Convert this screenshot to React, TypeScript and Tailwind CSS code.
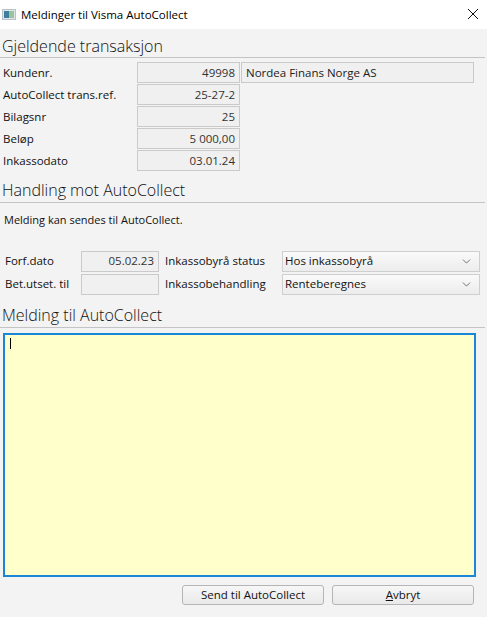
import { ChevronDown } from 'lucide-react'

const font = { fontFamily: '"Open Sans", "Noto Sans", sans-serif' }

function Field({ value, className = '' }: { value: string; className?: string }) {
  return (
    <div
      className={`flex h-[21px] items-center justify-end border border-[#cacaca] bg-[#f0f0f0] px-[4px] text-[11.5px] text-[#333] ${className}`}
    >
      {value}
    </div>
  )
}

function SectionHeader({ title, className = '' }: { title: string; className?: string }) {
  return (
    <div className={`border-b border-[#c4c4c4] pl-[2px] text-[16px] font-light leading-[20px] text-[#111] ${className}`}>
      {title}
    </div>
  )
}

function Select({ value }: { value: string }) {
  return (
    <div className="flex h-[21px] flex-1 items-center justify-between border border-[#cfcfcf] bg-gradient-to-b from-[#fafafa] to-[#ececec] pl-[2px] pr-[6px] text-[11.5px] text-[#111]">
      <span>{value}</span>
      <ChevronDown className="h-[13px] w-[13px] text-[#555]" strokeWidth={1.5} />
    </div>
  )
}

export default function App() {
  const rows = [
    ['Kundenr.', '49998'],
    ['AutoCollect trans.ref.', '25-27-2'],
    ['Bilagsnr', '25'],
    ['Beløp', '5 000,00'],
    ['Inkassodato', '03.01.24'],
  ]

  return (
    <div className="flex h-[617px] w-[487px] flex-col bg-[#f3f3f3]" style={font}>
      {/* title bar */}
      <div className="flex h-[29px] items-center bg-white pl-[2px] pr-[8px]">
        <svg width="14" height="11" viewBox="0 0 14 11" className="mr-[5px]">
          <rect x="0.5" y="0.5" width="13" height="10" fill="#dfe6ea" stroke="#b9c2c8" />
          <rect x="2" y="2" width="5" height="7" fill="#3f7f9e" />
          <rect x="7" y="2" width="5" height="7" fill="#9cc39a" />
        </svg>
        <span className="flex-1 text-[11.5px] text-black">Meldinger til Visma AutoCollect</span>
        <svg width="12" height="12" viewBox="0 0 12 12" className="mb-[1px]">
          <path d="M1 1L11 11M11 1L1 11" stroke="#111" strokeWidth="1" />
        </svg>
      </div>

      {/* Gjeldende transaksjon */}
      <SectionHeader title="Gjeldende transaksjon" className="mt-[7px] mr-[2px] pb-[1px]" />
      <div className="mt-[4px] flex flex-col gap-[1px]">
        {rows.map(([label, value], i) => (
          <div key={label} className="flex h-[21px] items-center">
            <span className="w-[137px] pl-[3px] text-[11.5px] text-[#111]">{label}</span>
            <Field value={value} className="w-[103px]" />
            {i === 0 && (
              <div className="ml-[1px] flex h-[21px] w-[233px] items-center border border-[#cacaca] bg-[#f0f0f0] px-[4px] text-[11.5px] text-[#222]">
                Nordea Finans Norge AS
              </div>
            )}
          </div>
        ))}
      </div>

      {/* Handling mot AutoCollect */}
      <SectionHeader title="Handling mot AutoCollect" className="mt-[9px] mr-[2px] pb-[2px]" />
      <div className="mt-[9px] pl-[4px] text-[11px] text-[#111]">Melding kan sendes til AutoCollect.</div>

      <div className="mt-[22px] flex flex-col gap-[2px] pr-[7px]">
        <div className="flex items-center">
          <span className="w-[81px] pl-[5px] text-[11.5px] text-[#111]">Forf.dato</span>
          <Field value="05.02.23" className="w-[78px]" />
          <span className="w-[123px] pl-[6px] text-[11.5px] text-[#111]">Inkassobyrå status</span>
          <Select value="Hos inkassobyrå" />
        </div>
        <div className="flex items-center">
          <span className="w-[81px] pl-[5px] text-[11.5px] text-[#111]">Bet.utset. til</span>
          <Field value="" className="w-[78px]" />
          <span className="w-[123px] pl-[6px] text-[11.5px] text-[#111]">Inkassobehandling</span>
          <Select value="Renteberegnes" />
        </div>
      </div>

      {/* Melding til AutoCollect */}
      <SectionHeader title="Melding til AutoCollect" className="mt-[10px] mr-[2px] pb-[2px]" />
      <div className="mt-[5px] ml-[3px] mr-[11px] h-[244px] border-2 border-[#1a86d8] bg-[#ffffcc] pl-[5px] pt-[3px]">
        <div className="h-[11px] w-[1px] bg-black" />
      </div>

      {/* buttons */}
      <div className="mt-[8px] flex justify-end gap-[8px] pr-[13px]">
        <button className="h-[20px] w-[142px] rounded-[3px] border border-[#b5b5b5] bg-gradient-to-b from-[#f7f7f7] to-[#e9e9e9] text-[11.5px] text-[#111]">
          Send til AutoCollect
        </button>
        <button className="h-[20px] w-[142px] rounded-[3px] border border-[#b5b5b5] bg-gradient-to-b from-[#f7f7f7] to-[#e9e9e9] text-[11.5px] text-[#111]">
          <span className="underline">A</span>vbryt
        </button>
      </div>
    </div>
  )
}
